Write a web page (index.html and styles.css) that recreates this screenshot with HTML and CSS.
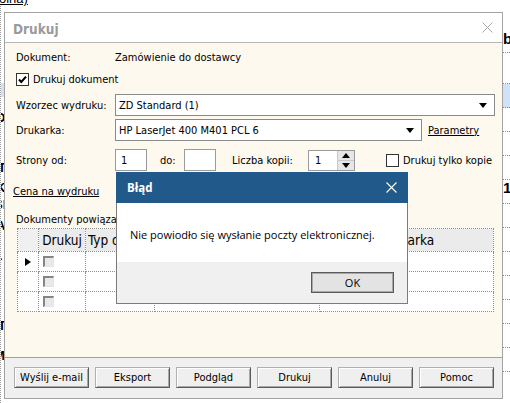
FILE: index.html
```html
<!DOCTYPE html>
<html lang="pl">
<head>
<meta charset="utf-8">
<title>Drukuj</title>
<link rel="stylesheet" href="styles.css">
</head>
<body>
<div class="top-link"><span>olna)</span></div>
<div class="app-body">
  <div class="edge-left">
    <div class="el-blue"></div>
    <div class="el-ch el-d">D</div>
    <div class="el-ch el-t1">T</div>
    <div class="el-ch el-k">K</div>
    <div class="el-ch el-s">SI</div>
    <div class="el-ch el-a">A</div>
    <div class="el-ch el-dash">-</div>
    <div class="el-ch el-t2">T</div>
    <div class="el-ch el-m">M</div>
  </div>
  <div class="edge-mid"></div>
  <div class="edge-right">
    <div class="er-row er-first"><span>b</span></div>
    <div class="er-row er-second"></div>
    <div class="er-row er-blue"></div>
    <div class="er-row"></div>
    <div class="er-row"></div>
    <div class="er-row"></div>
    <div class="er-row er-one"><span>1</span></div>
    <div class="er-row"></div>
    <div class="er-row"></div>
    <div class="er-row"></div>
    <div class="er-row"></div>
    <div class="er-row"></div>
    <div class="er-row"></div>
    <div class="er-row"></div>
  </div>
</div>

<div class="dlg">
  <div class="dlg-title">
    <span class="dlg-caption">Drukuj</span>
    <svg class="dlg-close" width="11" height="11" viewBox="0 0 11 11"><path d="M0.5 0.5 L10.5 10.5 M10.5 0.5 L0.5 10.5" stroke="#a8a8a8" stroke-width="1" fill="none"/></svg>
  </div>
  <div class="dlg-body">
    <div class="row r-doc"><span class="lbl">Dokument:</span><span>Zamówienie do dostawcy</span></div>
    <div class="row r-chk">
      <span class="cb"><svg width="11" height="11" viewBox="0 0 11 11"><path d="M2 5.5 L4.3 8 L9 2.6" stroke="#000" stroke-width="2" fill="none"/></svg></span>
      <span class="cb-text">Drukuj dokument</span>
    </div>
    <div class="row r-sel1">
      <span class="lbl">Wzorzec wydruku:</span>
      <div class="sel sel-wide"><span>ZD Standard (1)</span><span class="arrow"></span></div>
    </div>
    <div class="row r-sel2">
      <span class="lbl">Drukarka:</span>
      <div class="sel sel-printer"><span>HP LaserJet 400 M401 PCL 6</span><span class="arrow"></span></div>
      <span class="link link-param">Parametry</span>
    </div>
    <div class="row r-pages">
      <span class="lbl">Strony od:</span>
      <div class="inp">1</div>
      <span class="lbl-do">do:</span>
      <div class="inp"></div>
      <span class="lbl-copies">Liczba kopii:</span>
      <div class="spin">
        <span class="spin-val">1</span>
        <span class="spin-btns"><span class="spin-up"></span><span class="spin-down"></span></span>
      </div>
      <span class="cb cb-copies"></span>
      <span class="cb-text">Drukuj tylko kopie</span>
    </div>
    <div class="row r-cena"><span class="link link-cena">Cena na wydruku</span></div>
    <div class="row r-docs"><span class="docs-text">Dokumenty powiązane</span></div>
    <table class="grid">
      <colgroup><col class="c1"><col class="c2"><col class="c3"><col class="c4"><col class="c5"></colgroup>
      <tr class="gh"><th class="rh"></th><th>Drukuj</th><th class="tl"><span class="clip">Typ dok</span></th><th></th><th>Drukarka</th></tr>
      <tr><td class="rh"><span class="cur"></span></td><td><span class="gcb"></span></td><td></td><td></td><td></td></tr>
      <tr><td class="rh"></td><td><span class="gcb"></span></td><td></td><td></td><td></td></tr>
      <tr><td class="rh"></td><td><span class="gcb"></span></td><td></td><td></td><td></td></tr>
    </table>
  </div>
  <div class="dlg-foot">
    <div class="btn">Wyślij e-mail</div>
    <div class="btn">Eksport</div>
    <div class="btn">Podgląd</div>
    <div class="btn">Drukuj</div>
    <div class="btn">Anuluj</div>
    <div class="btn">Pomoc</div>
  </div>
</div>

<div class="err">
  <div class="err-title">
    <span>Błąd</span>
    <svg class="err-close" width="11" height="11" viewBox="0 0 11 11"><path d="M0.5 0.5 L10.5 10.5 M10.5 0.5 L0.5 10.5" stroke="#fff" stroke-width="1.1" fill="none"/></svg>
  </div>
  <div class="err-body">Nie powiodło się wysłanie poczty elektronicznej.</div>
  <div class="err-foot"><div class="ok">OK</div></div>
</div>
</body>
</html>
```
FILE: styles.css
```css
* { box-sizing: border-box; }
html, body { margin: 0; padding: 0; }
body {
  width: 510px;
  height: 403px;
  overflow: hidden;
  background: #fff;
  position: relative;
  font-family: "DejaVu Sans Condensed", "DejaVu Sans", sans-serif;
  font-stretch: condensed;
  font-size: 11px;
  color: #000;
}

/* background application */
.top-link {
  height: 6px;
  overflow: hidden;
  font-family: "Liberation Sans", sans-serif;
  font-stretch: normal;
  font-size: 13px;
  line-height: 13px;
}
.top-link span {
  display: block;
  margin-top: -8px;
  margin-left: -1px;
  text-decoration: underline;
}
.app-body { display: flex; height: 397px; }
.edge-left {
  width: 4px;
  overflow: hidden;
  display: flex;
  flex-direction: column;
  font-family: "Liberation Sans", sans-serif;
  font-stretch: normal;
  font-weight: bold;
  font-size: 13px;
  line-height: 13px;
  border-left: 1px dotted #9a9a9a;
}
.el-blue { height: 14px; margin-top: 77px; background: #cfe3f5; flex: none; }
.el-ch { height: 13px; flex: none; margin-left: -5px; }
.el-d { margin-top: 14px; }
.el-t1 { margin-top: 37px; margin-left: -3px; }
.el-k { margin-top: 7px; }
.el-s { margin-top: 4px; margin-left: -7px; }
.el-a { margin-top: 8px; }
.el-dash { margin-top: 20px; margin-left: -3px; }
.el-t2 { margin-top: 54px; margin-left: -3px; }
.el-m { margin-top: 17px; margin-left: -7px; }
.edge-mid { flex: 1; }
.edge-right {
  width: 8px;
  display: flex;
  flex-direction: column;
  overflow: hidden;
  font-family: "Liberation Sans", sans-serif;
  font-stretch: normal;
  font-weight: bold;
  font-size: 15px;
  line-height: 15px;
}
.er-row { height: 24px; flex: none; border-bottom: 1px dotted #8a8a8a; padding-left: 1px; }
.er-first { height: 47px; display: flex; align-items: flex-end; padding-bottom: 6px; }
.er-second { height: 31px; }
.er-blue { background: #cfe3f5; }

/* main dialog */
.dlg {
  position: absolute;
  left: 4px;
  top: 12px;
  width: 499px;
  height: 387px;
  border: 1px solid #a3a3a3;
  background: #fff;
  display: flex;
  flex-direction: column;
}
.dlg-title {
  height: 30px;
  flex: none;
  display: flex;
  align-items: center;
  justify-content: space-between;
  padding: 0 9px 0 8px;
  border-bottom: 1px solid #b6b6b6;
}
.dlg-caption {
  font-weight: bold;
  font-size: 13.5px;
  color: #9a9a9a;
  margin-top: 2px;
}
.dlg-close { margin-top: -1px; }
.dlg-body {
  flex: 1;
  background: #fef9ef;
  padding: 0 0 0 11px;
  display: flex;
  flex-direction: column;
}
.row { display: flex; align-items: center; flex: none; }
.lbl { width: 99px; flex: none; }
.r-doc { height: 29px; }
.r-chk { height: 14px; }
.r-sel1 { height: 22px; margin-top: 8px; }
.r-sel2 { height: 22px; margin-top: 3px; }
.r-pages { height: 22px; margin-top: 8px; }
.r-cena { height: 20px; margin-top: 10px; }
.r-docs { height: 18px; margin-top: 9px; }
.docs-text { width: 100px; overflow: hidden; white-space: nowrap; }

.cb {
  width: 13px;
  height: 13px;
  border: 1px solid #333;
  background: #fff;
  flex: none;
  display: flex;
  align-items: center;
  justify-content: center;
}
.cb-text { margin-left: 4px; }

.sel {
  height: 22px;
  border: 1px solid #8a8a8a;
  background: #fff;
  display: flex;
  align-items: center;
  justify-content: space-between;
  padding: 0 7px 0 3px;
  flex: none;
}
.sel-wide { width: 380px; }
.sel-printer { width: 307px; }
.arrow {
  width: 0;
  height: 0;
  border-left: 4px solid transparent;
  border-right: 4px solid transparent;
  border-top: 5px solid #000;
}
.link { text-decoration: underline; }
.link-param { margin-left: 6px; }
.link-cena { margin-left: -3px; }

.inp {
  width: 32px;
  height: 22px;
  border: 1px solid #9a9a9a;
  background: #fff;
  padding-left: 5px;
  display: flex;
  align-items: center;
  flex: none;
}
.lbl-do { margin-left: 13px; width: 24px; flex: none; }
.lbl-copies { margin-left: 16px; width: 76px; flex: none; }
.spin {
  width: 47px;
  height: 21px;
  border: 1px solid #9a9a9a;
  background: #fff;
  display: flex;
  flex: none;
}
.spin-val { flex: 1; padding-left: 6px; display: flex; align-items: center; }
.spin-btns {
  width: 17px;
  display: flex;
  flex-direction: column;
  border-left: 1px solid #c8c8c8;
  background: #e6e6e6;
}
.spin-up, .spin-down { flex: 1; display: flex; align-items: center; justify-content: center; }
.spin-up { border-bottom: 1px solid #c8c8c8; }
.spin-up::after {
  content: "";
  border-left: 4px solid transparent;
  border-right: 4px solid transparent;
  border-bottom: 5px solid #000;
}
.spin-down::after {
  content: "";
  border-left: 4px solid transparent;
  border-right: 4px solid transparent;
  border-top: 5px solid #000;
}
.cb-copies { margin-left: 31px; }

.grid {
  margin-left: 1px;
  width: 477px;
  table-layout: fixed;
  border-collapse: collapse;
  border: 1px dotted #8e8e8e;
  background: #fff;
}
.grid th, .grid td {
  border: 1px dotted #8e8e8e;
  padding: 0;
  height: 20px;
  overflow: hidden;
  white-space: nowrap;
}
.c1 { width: 21px; }
.c2 { width: 47px; }
.c3 { width: 69px; }
.c4 { width: 165px; }
.c5 { width: 174px; }
.gh th {
  height: 23px;
  background: #ebebeb;
  font-weight: normal;
  font-size: 13.5px;
  text-align: center;
}
.gh th.rh { background: #f0f0f0; }
.gh th.tl { text-align: left; padding-left: 2px; }
.clip { display: block; width: 28px; overflow: hidden; }
.grid td { vertical-align: middle; }
.cur {
  display: block;
  width: 0;
  height: 0;
  margin-left: 7px;
  border-top: 4px solid transparent;
  border-bottom: 4px solid transparent;
  border-left: 6px solid #000;
}
.gcb {
  display: block;
  width: 11px;
  height: 11px;
  margin-left: 4px;
  border-top: 2px solid #858585;
  border-left: 2px solid #858585;
  border-right: 1px solid #e4e4e4;
  border-bottom: 1px solid #e4e4e4;
  background: #e9e9e9;
}

.dlg-foot {
  height: 41px;
  flex: none;
  border-top: 1px solid #a0a0a0;
  background: #f0f0f0;
  padding: 9px 0 0 9px;
  display: flex;
  gap: 6px;
}
.btn {
  width: 75px;
  height: 21px;
  border: 1px solid;
  border-color: #b0b0b0 #5a5a5a #5a5a5a #b0b0b0;
  box-shadow: inset 1px 1px #fff, inset -1px -1px #a8a8a8;
  background: #efefef;
  display: flex;
  align-items: center;
  justify-content: center;
}

/* error message box */
.err {
  position: absolute;
  left: 116px;
  top: 172px;
  width: 292px;
  height: 132px;
  border: 1px solid #7b7b7b;
  border-top: none;
  background: #fff;
  display: flex;
  flex-direction: column;
  font-family: "Open Sans", "Noto Sans", sans-serif;
  font-stretch: normal;
  font-size: 11px;
}
.err-title {
  height: 31px;
  flex: none;
  margin: 0 -1px;
  background: #21598a;
  color: #fff;
  font-weight: bold;
  font-size: 11.5px;
  display: flex;
  align-items: center;
  justify-content: space-between;
  padding: 0 11px 0 11px;
}
.err-body {
  height: 59px;
  flex: none;
  padding: 24px 0 0 13px;
  line-height: 15px;
}
.err-foot {
  flex: 1;
  background: #f0f0f0;
  display: flex;
  justify-content: flex-end;
  padding: 10px 13px 0 0;
}
.ok {
  width: 83px;
  height: 21px;
  border: 1px solid #5b5b5b;
  box-shadow: inset 0 0 0 1px #a8a8a8;
  background: #e3e3e3;
  display: flex;
  align-items: center;
  justify-content: center;
}
```
